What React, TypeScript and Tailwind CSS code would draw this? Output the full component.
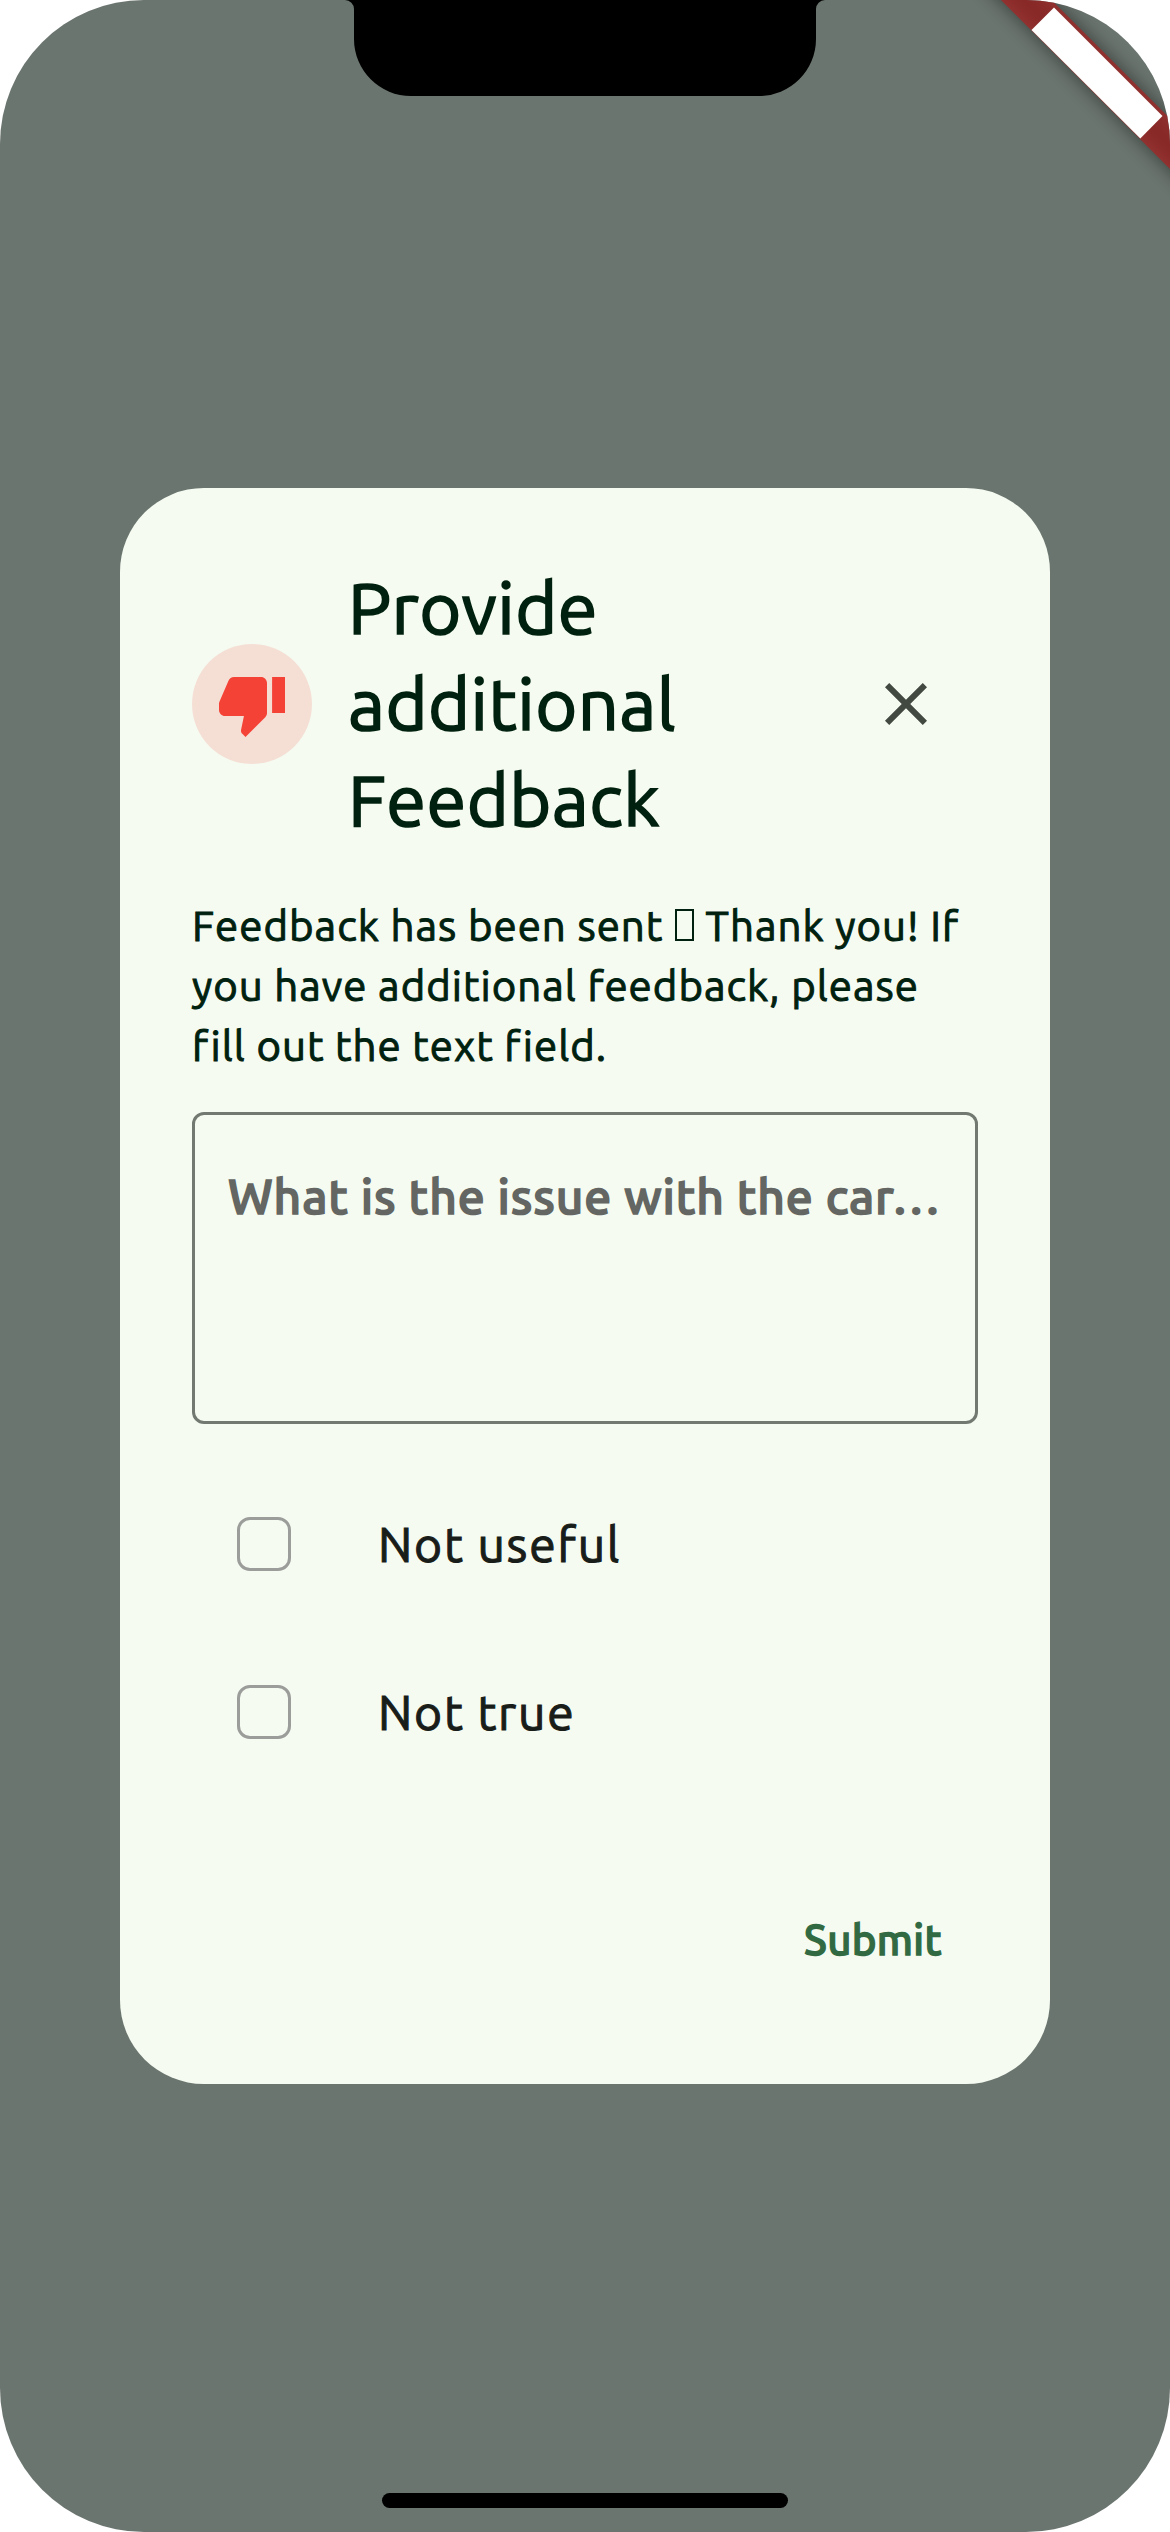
function DebugBanner() {
  return (
    <svg className="absolute right-0 top-0 h-[200px] w-[210px]" viewBox="0 0 210 200">
      <defs>
        <filter id="banner-shadow" x="-50%" y="-50%" width="200%" height="200%">
          <feGaussianBlur stdDeviation="10" />
        </filter>
      </defs>
      <path d="M11-30 61.5-30 240 148.5 240 199Z" fill="#000" fillOpacity=".5" filter="url(#banner-shadow)" />
      <path d="M11-30 61.5-30 250 158.5 250 209Z" fill="#b71c1c" fillOpacity=".63" />
      <path d="M94 7.5 202.5 116 180.3 138.5 71.5 30Z" fill="#fff" />
    </svg>
  );
}

function Notch() {
  return (
    <svg className="absolute left-[345px] top-0 h-24 w-[480px]" viewBox="0 0 480 96">
      <path d="M0 0A9 9 0 0 1 9 9V39A57 57 0 0 0 66 96H414A57 57 0 0 0 471 39V9A9 9 0 0 1 480 0Z" fill="#000" />
    </svg>
  );
}

function Option({ label }: { label: string }) {
  return (
    <label className="flex h-[168px] items-center pl-[45px]">
      <span className="size-[54px] shrink-0 rounded-[13px] border-[3px] border-[#9b9d9a]" />
      <span className="ml-[87px] text-[48px] leading-[72px] tracking-[1.8px] text-[#191d19] [-webkit-text-stroke:1.1px]">{label}</span>
    </label>
  );
}

export default function App() {
  return (
    <div className="relative flex h-[2532px] w-[1170px] flex-col items-center overflow-hidden rounded-[144px] bg-[#6b756f] font-['Ubuntu','Noto_Sans',sans-serif]">
      <DebugBanner />
      <Notch />
      <main className="mt-[487.5px] flex h-[1596px] w-[930px] flex-col rounded-[84px] bg-[#f5fbf1] px-[72px] pt-[72px] text-[#00210f]">
        <header className="flex h-[288px] items-center">
          <span className="flex size-[120px] shrink-0 items-center justify-center rounded-full bg-[#f5dfd5]">
            <svg className="size-[72px]" viewBox="0 0 24 24" fill="#f44336">
              <path d="M15 3H6c-.83 0-1.54.5-1.84 1.22l-3.02 7.05c-.09.23-.14.47-.14.73v2c0 1.1.9 2 2 2h6.31l-.95 4.57-.03.32c0 .41.17.79.44 1.06L9.83 23l6.59-6.59c.36-.36.58-.86.58-1.41V5c0-1.1-.9-2-2-2zm3.7 0v12h4.3V3h-4.3z" />
            </svg>
          </span>
          <h1 className="ml-9 w-[400px] text-[72px] leading-[96px] tracking-[.45px] [-webkit-text-stroke:1.7px]">Provide additional Feedback</h1>
          <button className="ml-auto mr-9 flex size-[72px] items-center justify-center">
            <svg className="size-[72px]" viewBox="0 0 24 24" fill="#424940">
              <path d="M19 6.41 17.59 5 12 10.59 6.41 5 5 6.41 10.59 12 5 17.59 6.41 19 12 13.41 17.59 19 19 17.59 13.41 12z" />
            </svg>
          </button>
        </header>
        <p className="mt-12 whitespace-nowrap text-[42px] leading-[60px] tracking-[1px] [-webkit-text-stroke:1px]">
          Feedback has been sent <span className="mx-px inline-block h-8 w-[19px] border-2 border-[#00210f]" /> Thank you! If
          <br />
          you have additional feedback, please
          <br />
          fill out the text field.
        </p>
        <div className="mt-9 h-[312px] rounded-[12px] border-[3px] border-[#727970] px-[33px] pt-[45px]">
          <p className="whitespace-nowrap text-[48px] font-medium leading-[72px] tracking-[.85px] text-[#636662] [-webkit-text-stroke:1.5px]">What is the issue with the car…</p>
        </div>
        <div className="mt-9 flex flex-col">
          <Option label="Not useful" />
          <Option label="Not true" />
        </div>
        <button className="mr-9 mt-[114px] self-end text-[42px] font-medium leading-[60px] tracking-[.3px] text-[#316a42] [-webkit-text-stroke:1.3px]">Submit</button>
      </main>
      <div className="mb-6 mt-auto h-[15px] w-[406px] rounded-full bg-black" />
    </div>
  );
}
